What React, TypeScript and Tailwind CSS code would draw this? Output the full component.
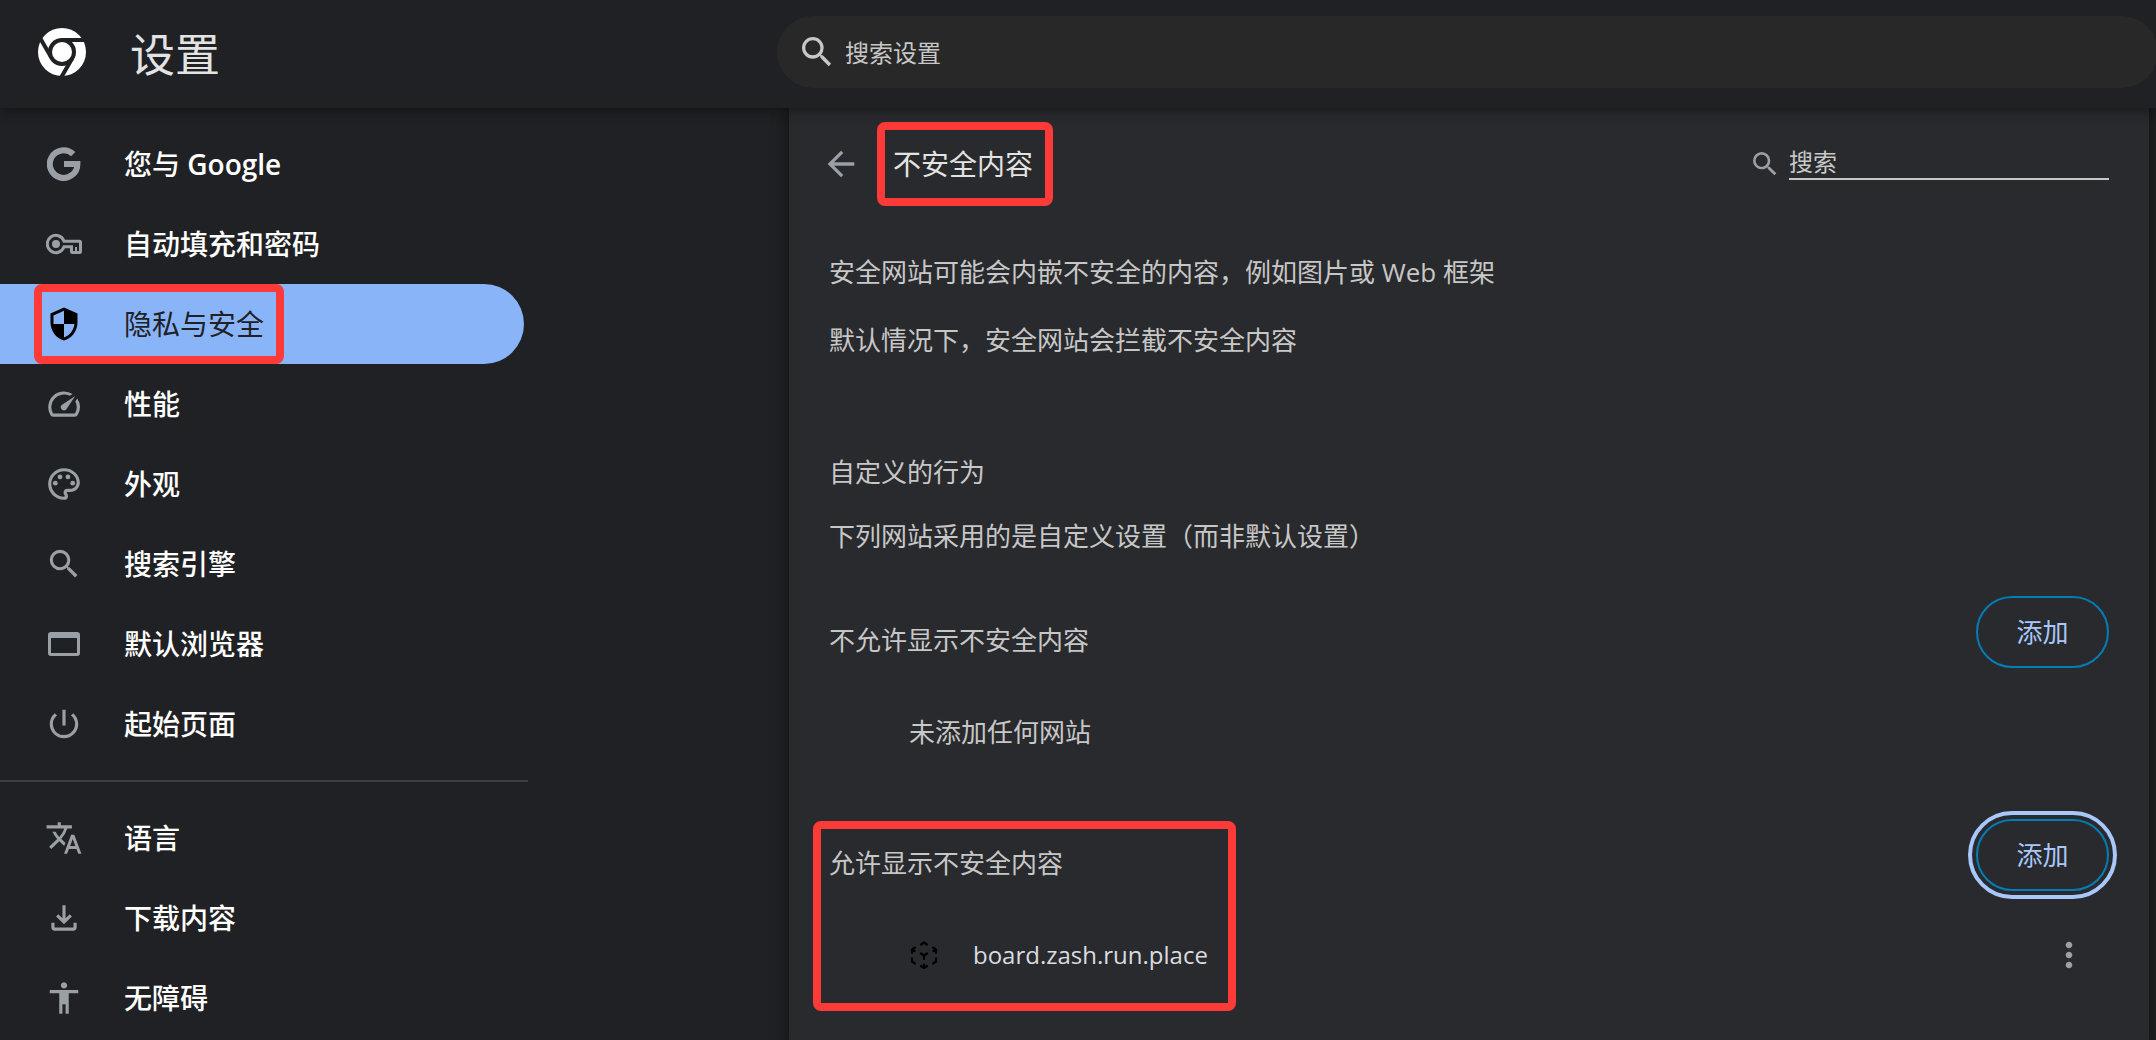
import type { ReactNode } from "react";
import {
  MdAccessibility,
  MdArrowBack,
  MdMoreVert,
  MdOutlineFileDownload,
  MdOutlinePalette,
  MdPowerSettingsNew,
  MdSearch,
  MdSecurity,
  MdSpeed,
  MdTranslate,
} from "react-icons/md";

function ChromeLogo() {
  return (
    <svg viewBox="-24 -24 48 48" className="size-12" aria-hidden="true">
      <circle r="24" fill="#fff" />
      <circle r="14" fill="#202124" />
      <g stroke="#202124" strokeWidth="4">
        <path d="M0-12H25" />
        <path d="M0-12H25" transform="rotate(120)" />
        <path d="M0-12H25" transform="rotate(240)" />
      </g>
      <circle r="10" fill="#fff" />
    </svg>
  );
}

function GoogleIcon() {
  return (
    <svg viewBox="0 0 34 34" className="size-[34px]" fill="none" stroke="currentColor" strokeWidth="6" aria-hidden="true">
      <path d="M26.2 7.2A13.8 13.8 0 1 0 30.4 17H17" />
    </svg>
  );
}

function KeyIcon() {
  return (
    <svg viewBox="0 0 36 36" className="size-9" fill="none" stroke="currentColor" strokeWidth="3" aria-hidden="true">
      <path d="M18 15.2A8.6 8.6 0 1 0 18 20.8H25.5V25.5a1 1 0 0 0 1 1H33.500a1 1 0 0 0 1-1V16.200a1 1 0 0 0-1-1Z" />
      <path d="M30 21v5" strokeWidth="2" />
      <circle cx="10" cy="18" r="4" fill="currentColor" stroke="none" />
    </svg>
  );
}

function BrowserIcon() {
  return (
    <svg viewBox="0 0 32 24" className="h-6 w-8" fill="currentColor" aria-hidden="true">
      <path fillRule="evenodd" d="M3 0H29a3 3 0 0 1 3 3V21a3 3 0 0 1-3 3H3a3 3 0 0 1-3-3V3a3 3 0 0 1 3-3ZM3 6V21H29V6Z" />
    </svg>
  );
}

function CubeIcon() {
  return (
    <svg viewBox="0 0 30 30" className="size-[30px]" fill="none" stroke="#000" strokeWidth="2.2" strokeLinecap="round" strokeLinejoin="round" aria-hidden="true">
      <path d="M12 4.500l3-2 3 2" />
      <path d="M6 7.500l-3 2v3.500M3 9.500l2.500 1.500" />
      <path d="M24 7.500l3 2v3.500M27 9.500l-2.500 1.500" />
      <path d="M3 18.500v3l3 2M27 18.500v3l-3 2" />
      <path d="M12 26l3 2 3-2M15 24.500v3.500" />
      <path d="M12 13.500l3 2 3-2M15 15.500v3.500" />
    </svg>
  );
}

type Item = { id: string; label: ReactNode; icon: ReactNode; active?: boolean };

const primary: Item[] = [
  {
    id: "people",
    label: (
      <>
        您与 <span className="font-semibold">Google</span>
      </>
    ),
    icon: <GoogleIcon />,
  },
  { id: "autofill", label: "自动填充和密码", icon: <KeyIcon /> },
  { id: "privacy", label: "隐私与安全", icon: <MdSecurity size={36} />, active: true },
  { id: "performance", label: "性能", icon: <MdSpeed size={38} /> },
  { id: "appearance", label: "外观", icon: <MdOutlinePalette size={38} /> },
  { id: "search", label: "搜索引擎", icon: <MdSearch size={38} /> },
  { id: "browser", label: "默认浏览器", icon: <BrowserIcon /> },
  { id: "startup", label: "起始页面", icon: <MdPowerSettingsNew size={38} /> },
];

const secondary: Item[] = [
  { id: "languages", label: "语言", icon: <MdTranslate size={38} /> },
  { id: "downloads", label: "下载内容", icon: <MdOutlineFileDownload size={38} /> },
  { id: "accessibility", label: "无障碍", icon: <MdAccessibility size={38} /> },
];

function Highlight({ className }: { className: string }) {
  return (
    <span
      aria-hidden="true"
      className={`pointer-events-none absolute rounded-lg border-8 border-[#fc3a38] ${className}`}
    />
  );
}

function NavItem({ item }: { item: Item }) {
  return (
    <li>
      <a
        href="#"
        aria-current={item.active ? "page" : undefined}
        className={`relative mr-1 flex h-20 items-center rounded-r-full pl-11 text-[28px] ${
          item.active ? "bg-[#8ab4f8] text-[#202124]" : "font-medium text-white"
        }`}
      >
        <span className={`flex w-10 shrink-0 justify-center ${item.active ? "text-black" : "text-[#9aa0a6]"}`}>
          {item.icon}
        </span>
        <span className="ml-10">{item.label}</span>
        {item.active && <Highlight className="inset-y-0 left-[34px] w-[250px]" />}
      </a>
    </li>
  );
}

function AddButton({ focused }: { focused?: boolean }) {
  return (
    <button
      type="button"
      className={`h-18 w-[133px] shrink-0 rounded-full border-2 border-[#047db7] text-[26px] text-[#a8c7fa] ${
        focused ? "outline-4 outline-offset-4 outline-[#a8c7fa]" : ""
      }`}
    >
      添加
    </button>
  );
}

export default function App() {
  return (
    <div className="flex min-h-screen flex-col overflow-hidden bg-[#202124] font-['Open_Sans','Noto_Sans_CJK_SC',sans-serif]">
      <header className="relative z-10 flex h-27 shrink-0 items-center bg-[#202124] shadow-[0_2px_12px_rgba(0,0,0,0.45)]">
        <div className="mb-1 flex w-[777px] shrink-0 items-center pl-[38px]">
          <ChromeLogo />
          <h1 className="ml-11 pt-1 text-[45px] leading-none text-[#e3e3e3]">设置</h1>
        </div>
        <label className="-mr-0.5 mb-1 flex h-18 min-w-0 flex-1 items-center rounded-full bg-[#282828] pl-5 text-[#c7c7c7]">
          <MdSearch size={40} aria-hidden="true" />
          <input
            type="text"
            aria-label="搜索设置"
            placeholder="搜索设置"
            className="ml-2 min-w-0 flex-1 bg-transparent pt-0.5 text-2xl outline-none placeholder:text-[#c7c7c7]"
          />
        </label>
      </header>

      <div className="flex flex-1">
        <nav className="w-[528px] shrink-0 pt-4">
          <ul>
            {primary.map((item) => (
              <NavItem key={item.id} item={item} />
            ))}
          </ul>
          <hr className="my-4 border-t-2 border-[#3c4043]" />
          <ul>
            {secondary.map((item) => (
              <NavItem key={item.id} item={item} />
            ))}
          </ul>
        </nav>

        <main className="mr-[7px] ml-[261px] min-w-0 flex-1 bg-[#292a2d] px-10 text-[26px] leading-9 text-[#c7c7c7] shadow-[0_2px_12px_4px_rgba(0,0,0,0.35)]">
          <div className="flex h-28 items-center">
            <button type="button" aria-label="返回" className="-ml-2 text-[#9aa0a6]">
              <MdArrowBack size={40} />
            </button>
            <div className="relative ml-4 flex h-21 items-center pr-5 pl-4">
              <h2 className="text-[28px] text-[#e3e3e3]">不安全内容</h2>
              <Highlight className="inset-0" />
            </div>
            <label className="ml-auto flex items-center text-[#9aa0a6]">
              <MdSearch size={32} aria-hidden="true" />
              <input
                type="text"
                aria-label="搜索"
                placeholder="搜索"
                className="mb-1 ml-2 h-9 w-80 border-b-2 border-[#c7c7c7] bg-transparent text-2xl outline-none placeholder:text-[#c7c7c7]"
              />
            </label>
          </div>

          <p className="mt-[34px]">安全网站可能会内嵌不安全的内容，例如图片或 Web 框架</p>
          <p className="mt-8">默认情况下，安全网站会拦截不安全内容</p>

          <h3 className="mt-24">自定义的行为</h3>
          <p className="mt-7">下列网站采用的是自定义设置（而非默认设置）</p>

          <section>
            <div className="mt-[42px] flex items-start justify-between">
              <h3 className="pt-[26px]">不允许显示不安全内容</h3>
              <AddButton />
            </div>
            <p className="mt-[46px] pl-20">未添加任何网站</p>
          </section>

          <section className="relative mt-[69px]">
            <div className="flex items-start justify-between">
              <h3 className="pt-[26px]">允许显示不安全内容</h3>
              <AddButton focused />
            </div>
            <div className="mt-11 flex h-10 items-center pl-20">
              <CubeIcon />
              <span className="ml-[34px] text-2xl text-[#dadce0]">board.zash.run.place</span>
              <button type="button" aria-label="更多操作" className="mr-5 ml-auto text-[#9aa0a6]">
                <MdMoreVert size={40} />
              </button>
            </div>
            <Highlight className="top-0.5 -left-4 h-[190px] w-[423px]" />
          </section>
        </main>
      </div>
    </div>
  );
}
